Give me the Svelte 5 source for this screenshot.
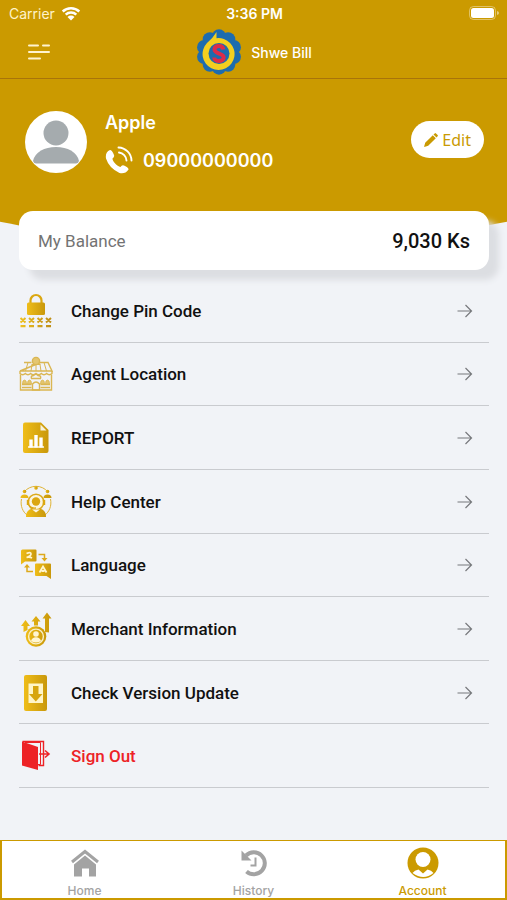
<script>
  const items = [
    { id: 'pin', label: 'Change Pin Code' },
    { id: 'agent', label: 'Agent Location' },
    { id: 'report', label: 'REPORT' },
    { id: 'help', label: 'Help Center' },
    { id: 'language', label: 'Language' },
    { id: 'merchant', label: 'Merchant Information' },
    { id: 'update', label: 'Check Version Update' },
    { id: 'signout', label: 'Sign Out' }
  ];
  const tabs = [
    { id: 'home', label: 'Home' },
    { id: 'history', label: 'History' },
    { id: 'account', label: 'Account' }
  ];
  const petals = Array.from({ length: 10 }, (_, i) => {
    const a = ((i * 36 - 90) * Math.PI) / 180;
    return { x: 24 + 15.5 * Math.cos(a), y: 24 + 15.5 * Math.sin(a) };
  });
  let active = $state('account');
</script>

{#snippet menuIcon(id)}
  <svg class="icon" viewBox="0 0 34 36" aria-hidden="true">
    {#if id === 'pin'}
      <path d="M11.500 12V7.500a5.500 5.500 0 0 1 11 0V12" fill="none" stroke="#dba711" stroke-width="2.200" />
      <rect x="8" y="9.500" width="18" height="12.500" rx="1.500" fill="url(#gold)" />
      <g stroke="url(#goldwide)" stroke-width="2" fill="none">
        <path d="M1.500 25l5 4.500m0-4.500l-5 4.500M10 25l5 4.500m0-4.500l-5 4.500M18.500 25l5 4.500m0-4.500l-5 4.500M27 25l5 4.500m0-4.500l-5 4.500" />
        <path d="M1.500 33.200h5M10 33.200h5M18.500 33.200h5M27 33.200h5.010" stroke-width="2.200" />
      </g>
    {:else if id === 'agent'}
      <g fill="none" stroke="#dab652" stroke-width="1.400">
        <path d="M5 6.500h7.500M21.500 6.500H29L33 15H1z" />
        <circle cx="17" cy="5" r="3.600" fill="#e4c670" />
        <path d="M12.500 8.500h9M9 6.500L6.500 15M13 8.500l-1 6.500M17 8.500V15M21 8.500l1 6.500M25 6.500l2.500 8.500" stroke-width="1" />
        <path d="M1 15v2.500q2.700 2.500 5.300 0q2.700 2.500 5.300 0q2.700 2.500 5.400 0q2.700 2.500 5.300 0q2.700 2.500 5.300 0q2.700 2.500 5.400 0V15" />
        <path d="M1.500 18.500V34h31V18.500M3 28.500h9.500M21.500 28.500H31M3 31.500h9.500M21.500 31.500H31" />
        <path d="M13.500 34v-6q3.500-4 7 0v6z" />
        <path d="M12.500 22.500q-1-3 2-3q2.500-2.500 4.500 0q3.500 0 2.500 3z" />
        <path d="M3.500 28q0-4 2-4t2 4zM8.500 28q0-4 2-4t2 4zM21.500 28q0-4 2-4t2 4zM26.500 28q0-4 2-4t2 4z" fill="#e4c670" stroke-width=".8" />
      </g>
    {:else if id === 'report'}
      <path d="M6 3H22l7.500 7.500V31.500a2 2 0 0 1-2 2H6a2 2 0 0 1-2-2V5a2 2 0 0 1 2-2z" transform="translate(0 -.5)" fill="url(#gold)" />
      <path d="M21.500 4.500V10.500H27.500z" fill="#f7f2dc" />
      <path d="M12 27.500v-8M17 27.500V15M22 27.500V17.500" stroke="#fff" stroke-width="3.400" fill="none" />
      <path d="M9 27h16" stroke="#fff" stroke-width="1.400" />
    {:else if id === 'help'}
      <g fill="none" stroke="#e0b435" stroke-width="1">
        <path d="M5 8A15.500 15.500 0 0 1 29 8M2.500 15C1 22 4 28 8 31M31.500 15C33 22 30 28 26 31" />
      </g>
      <g fill="url(#gold)">
        <circle cx="17" cy="4" r="1.800" /><circle cx="5.500" cy="7.500" r="1.800" /><circle cx="28.500" cy="7.500" r="1.800" />
        <path d="M1.500 14q0-3.500 4-3.500t4 3.500zM24.500 14q0-3.500 4-3.500t4 3.500z" />
        <path d="M7 33q-.5-6.500 6-8.500h8q6.500 2 6 8.500z" />
      </g>
      <circle cx="17" cy="18" r="7.800" fill="#fbf6e2" stroke="#dcaa1c" stroke-width="1.600" />
      <circle cx="17" cy="17.500" r="4.200" fill="#dba711" />
      <path d="M13 25.500l4 3 4-3" fill="#fbf6e2" />
      <path d="M9 16v5M25 16v5" fill="none" stroke="#dba711" stroke-width="2.400" />
      <path d="M10 21q2 3.500 7 3" fill="none" stroke="#dba711" stroke-width="1.300" />
    {:else if id === 'language'}
      <path d="M3.500 2.500H16.500q1 0 1 1V13.500q0 1-1 1H6L2 17.500V4q0-1.500 1.500-1.500z" fill="url(#gold)" />
      <path d="M17 16.500H31q1 0 1 1V32l-4.500-3H17q-1 0-1-1V17.500q0-1 1-1z" fill="url(#gold)" />
      <path d="M7.500 6.500q4.500-2 4.500.5 0 2-4.500 3.500 3-1 5.500.5" fill="none" stroke="#fff6cf" stroke-width="1.700" />
      <path d="M20.500 25.500l3.500-6 3.500 6M22.500 24h3" fill="none" stroke="#fff6cf" stroke-width="1.800" />
      <path d="M19.500 7.500H25.500v4M14 24.500H8v-5" fill="none" stroke="#dda91b" stroke-width="1.500" />
      <path d="M22.500 11h6l-3 3.500zM5 20.500h6l-3-3.500z" fill="#dda91b" />
    {:else if id === 'merchant'}
      <path d="M4.500 21V15H2L6.500 9l4.500 6H8.500v4zM15 14.500v-4h-2.500l4.500-5.500 4.500 5.500H19v4zM26 21V7.500H23.500L28 1.500l4.500 6H30V21.500z" fill="url(#gold)" />
      <circle cx="17" cy="25.500" r="10.300" fill="url(#gold)" />
      <circle cx="17" cy="25.500" r="7.400" fill="none" stroke="#f8efc7" stroke-width="1.400" />
      <circle cx="17" cy="23" r="2.800" fill="#fff6d2" />
      <path d="M12 30q1-3.800 5-3.800t5 3.800q-5 3-10 0z" fill="#fff6d2" />
    {:else if id === 'update'}
      <rect x="5" y="0" width="23" height="36" rx="2" fill="url(#gold)" />
      <path d="M9.500 8.500h14.500v19.500H9.500z" fill="#fff5c8" />
      <path d="M14 11h5.500v8h4l-6.700 7.500-6.800-7.500h4z" fill="#d7a50e" />
    {:else}
      <path d="M3.500 3.500h21v24h-5" fill="none" stroke="#ed2226" stroke-width="1.400" />
      <path d="M3 3.500L19 9v23L3 27.500z" fill="#ed2226" />
      <path d="M6 4.500h15.500v22H19" fill="none" stroke="#ed2226" stroke-width="1" />
      <path d="M20 16h9M26 12.500l4 3.500-4 3.500" fill="none" stroke="#ed2226" stroke-width="1.600" />
    {/if}
  </svg>
{/snippet}

<div class="app">
  <svg class="defs" aria-hidden="true">
    <defs>
      <linearGradient id="gold"><stop offset="0" stop-color="#efbd19" /><stop offset="1" stop-color="#c9980b" /></linearGradient>
      <linearGradient id="goldwide" gradientUnits="userSpaceOnUse" x1="0" x2="34" y1="0" y2="0"><stop offset="0" stop-color="#f1c320" /><stop offset="1" stop-color="#bb8b16" /></linearGradient>
    </defs>
  </svg>

  <div class="status">
    <span class="carrier">Carrier
      <svg width="20" height="15" viewBox="0 0 20 15" aria-hidden="true">
        <path d="M1.700 5.500a12 12 0 0 1 16.600 0M4.700 8.700a7.700 7.700 0 0 1 10.600 0" fill="none" stroke="#fff" stroke-width="2.500" />
        <path d="M10 14.500l-3.500-3.600a5 5 0 0 1 7 0z" fill="#fff" />
      </svg>
    </span>
    <span class="time">3:36 PM</span>
    <svg class="battery" width="31" height="14" viewBox="0 0 31 14" aria-hidden="true">
      <rect x="0.500" y="0.500" width="26" height="13" rx="4" fill="none" stroke="#fff" stroke-opacity=".4" />
      <rect x="2" y="2" width="23" height="10" rx="2.500" fill="#fff" />
      <path d="M28 5q2 .5 2 2t-2 2z" fill="#fff" fill-opacity=".5" />
    </svg>
  </div>

  <header class="navbar">
    <button class="burger" aria-label="Menu">
      <svg width="22" height="18" viewBox="0 0 22 18"><path d="M1 2.500h9M15 2.500h6M1 9h20M1 15.500h11" stroke="#fff3cf" stroke-width="2" stroke-linecap="round" /></svg>
    </button>
    <div class="brand">
      <svg width="48" height="48" viewBox="0 0 48 48" aria-hidden="true">
        <g fill="#1d6cae">
          <circle cx="24" cy="24" r="19" />
          {#each petals as p}<circle cx={p.x} cy={p.y} r="7.200" />{/each}
        </g>
        <path d="M21.500 4v6.200A16 16 0 1 1 12 15Q18 10 21.500 4z" fill="#f4cf1f" />
        <circle cx="24" cy="25.500" r="10.500" fill="#1d6cae" />
        <path d="M28.300 21.500q-.5-3.500-4.300-3.500-4.500 0-4.500 3.500c0 4.500 9.200 3.500 9.200 7.800 0 5-9.300 5-9.500.2" fill="none" stroke="#dc2c49" stroke-width="4" />
      </svg>
      <span>Shwe Bill</span>
    </div>
  </header>

  <section class="hero">
    <svg class="avatar" width="62" height="62" viewBox="0 0 62 62" role="img" aria-label="Profile picture">
      <circle cx="31" cy="31" r="31" fill="#fff" />
      <circle cx="31" cy="22" r="12.500" fill="#a5abae" />
      <path d="M8 50q1-6 8-10.500 6-3.500 15-3.500t15 3.500q7 4.500 8 10.500-1 2.500-3 2.500H11q-2 0-3-2.500z" fill="#a5abae" />
    </svg>
    <div class="who">
      <span class="name">Apple</span>
      <span class="phone">
        <svg width="28" height="28" viewBox="0 0 28 28" aria-hidden="true">
          <path d="M5 4Q7 4 9 9q.7 2-1.500 3.500c0 3 4.500 7.500 8 8.500q1.500-2.500 3.500-1.500 5 2.500 4.500 4Q20 28.500 14.500 27 4 22 1 12.500 0 6 5 4z" fill="#fff" />
          <path d="M13.500 1.500A13.500 13.500 0 0 1 26.500 14.500M14 6.500A8.500 8.500 0 0 1 21.500 14.500" fill="none" stroke="#fff" stroke-width="1.900" stroke-linecap="round" />
        </svg>
        09000000000
      </span>
    </div>
    <button class="edit">
      <svg width="14" height="14" viewBox="0 0 14 14" aria-hidden="true"><path d="M0 14l1.200-4.200 7.600-7.600 3 3-7.600 7.600zM9.500 1.500L10.700.4q.6-.6 1.300 0l1.600 1.600q.6.700 0 1.300l-1.100 1.200z" fill="#c99a02" /></svg>
      Edit
    </button>
  </section>

  <section class="balance">
    <span>My Balance</span>
    <strong>9,030 Ks</strong>
  </section>

  <ul class="menu">
    {#each items as item}
      <li>
        <button class:danger={item.id === 'signout'}>
          {@render menuIcon(item.id)}
          <span>{item.label}</span>
          {#if item.id !== 'signout'}
            <svg class="arrow" width="16" height="14" viewBox="0 0 16 14" aria-hidden="true"><path d="M.5 7h14M8.500 1l6 6-6 6" fill="none" stroke="#77797c" stroke-width="1.200" /></svg>
          {/if}
        </button>
      </li>
    {/each}
  </ul>

  <nav class="tabs">
    {#each tabs as tab}
      <button class:active={active === tab.id} onclick={() => (active = tab.id)}>
        <svg width="32" height="32" viewBox="0 0 32 32" aria-hidden="true">
          {#if tab.id === 'home'}
            <path d="M3 15L16 4.500l13 10.500" fill="none" stroke="currentColor" stroke-width="3" />
            <path d="M5 17.500L16 8.500l11 9v12h-7V21.500h-7v8H5z" fill="currentColor" />
          {:else if tab.id === 'history'}
            <path d="M8 8.500A11 11 0 1 1 8.500 24.500" fill="none" stroke="currentColor" stroke-width="4" />
            <path d="M3.500 3.500L13.500 13.500H3.500z" fill="currentColor" />
            <path d="M17.500 10.500v8h-5" fill="none" stroke="currentColor" stroke-width="2" />
          {:else}
            <circle cx="16" cy="16" r="15.500" fill="currentColor" />
            <circle cx="16" cy="12.500" r="7.500" fill="#fff" />
            <path d="M5.500 26q2-3 6-3.500l4.500 4 4.500-4q4 .5 6 3.500-10 8-21 0z" fill="#fff" />
          {/if}
        </svg>
        {tab.label}
      </button>
    {/each}
  </nav>
</div>

<style>
  :global(body) { background: #f1f3f7; }
  .app {
    display: flex;
    flex-direction: column;
    min-height: 100vh;
    overflow: hidden;
    background: #f1f3f7;
    font-family: Roboto, "Liberation Sans", sans-serif;
  }
  svg { flex: none; }
  button { border: 0; padding: 0; background: none; font: inherit; color: inherit; cursor: pointer; }
  .defs { position: absolute; width: 0; height: 0; }
  .status, .navbar {
    display: grid;
    grid-template-columns: 1fr auto 1fr;
    align-items: center;
    background: #cb9a00;
    color: #fff;
    font-family: Inter, "Liberation Sans", sans-serif;
  }
  .status { height: 26px; padding: 0 7px 0 9px; font-size: 14px; }
  .carrier { display: flex; align-items: center; gap: 6px; color: #fff3c9; }
  .time { font-weight: 600; }
  .battery { justify-self: end; }
  .navbar { height: 52px; padding: 0 28px; border-bottom: 1px solid #a8740a; }
  .burger { display: flex; }
  .brand { display: flex; align-items: center; gap: 8px; font-size: 14px; font-weight: 500; }
  .hero {
    display: flex;
    align-items: flex-start;
    height: 134px;
    padding: 32px 23px 0 25px;
    background: #cb9a00;
    clip-path: ellipse(98% 100% at 50% 0);
    color: #fff;
    font-family: Inter, "Liberation Sans", sans-serif;
    font-weight: 600;
    font-size: 18px;
  }
  .who { display: flex; flex-direction: column; gap: 11px; flex: 1; padding-left: 18px; }
  .name { line-height: 24px; }
  .phone { display: flex; align-items: center; gap: 10px; }
  .edit {
    display: flex;
    align-items: center;
    gap: 4px;
    height: 37px;
    margin-top: 10px;
    padding: 0 13px;
    border-radius: 19px;
    background: #fff;
    color: #c99a02;
    font-family: "Noto Sans", sans-serif;
    font-size: 16px;
    font-weight: 400;
  }
  .balance {
    position: relative;
    display: flex;
    align-items: center;
    justify-content: space-between;
    height: 59px;
    margin: -34px 18px 0 19px;
    padding: 0 19px;
    box-sizing: border-box;
    border-radius: 14px;
    background: #fff;
    box-shadow: 10px 10px 6px #dcdee2;
    color: #737373;
    font-size: 17px;
  }
  strong { color: #111; font-size: 20px; font-weight: 500; }
  .menu {
    display: flex;
    flex: 1;
    flex-direction: column;
    margin: 9px 18px 52px 19px;
    padding: 0;
    list-style: none;
  }
  li { display: flex; flex: 1; min-height: 56px; border-bottom: 1px solid #c9cbcf; }
  li button {
    display: flex;
    flex: 1;
    align-items: center;
    gap: 18px;
    padding: 1px 16px 0 0;
    color: #111;
    font-size: 17px;
    font-weight: 500;
    text-align: left;
  }
  .icon { width: 34px; height: 36px; }
  li span { flex: 1; }
  li .danger { color: #ed2226; }
  .tabs {
    display: grid;
    grid-template-columns: repeat(3, 1fr);
    height: 60px;
    background: #fff;
    box-shadow: inset 2px 0 #cb9a00, inset -2px 0 #cb9a00, inset 0 1px #cb9a00, inset 0 -2px #cb9a00;
  }
  .tabs button {
    display: flex;
    flex-direction: column;
    align-items: center;
    gap: 4px;
    padding-top: 7px;
    color: #a3a3a3;
    font-family: Inter, "Liberation Sans", sans-serif;
    font-size: 12px;
    font-weight: 500;
    line-height: 15px;
  }
  .tabs .active { color: #cb9a00; }
</style>
